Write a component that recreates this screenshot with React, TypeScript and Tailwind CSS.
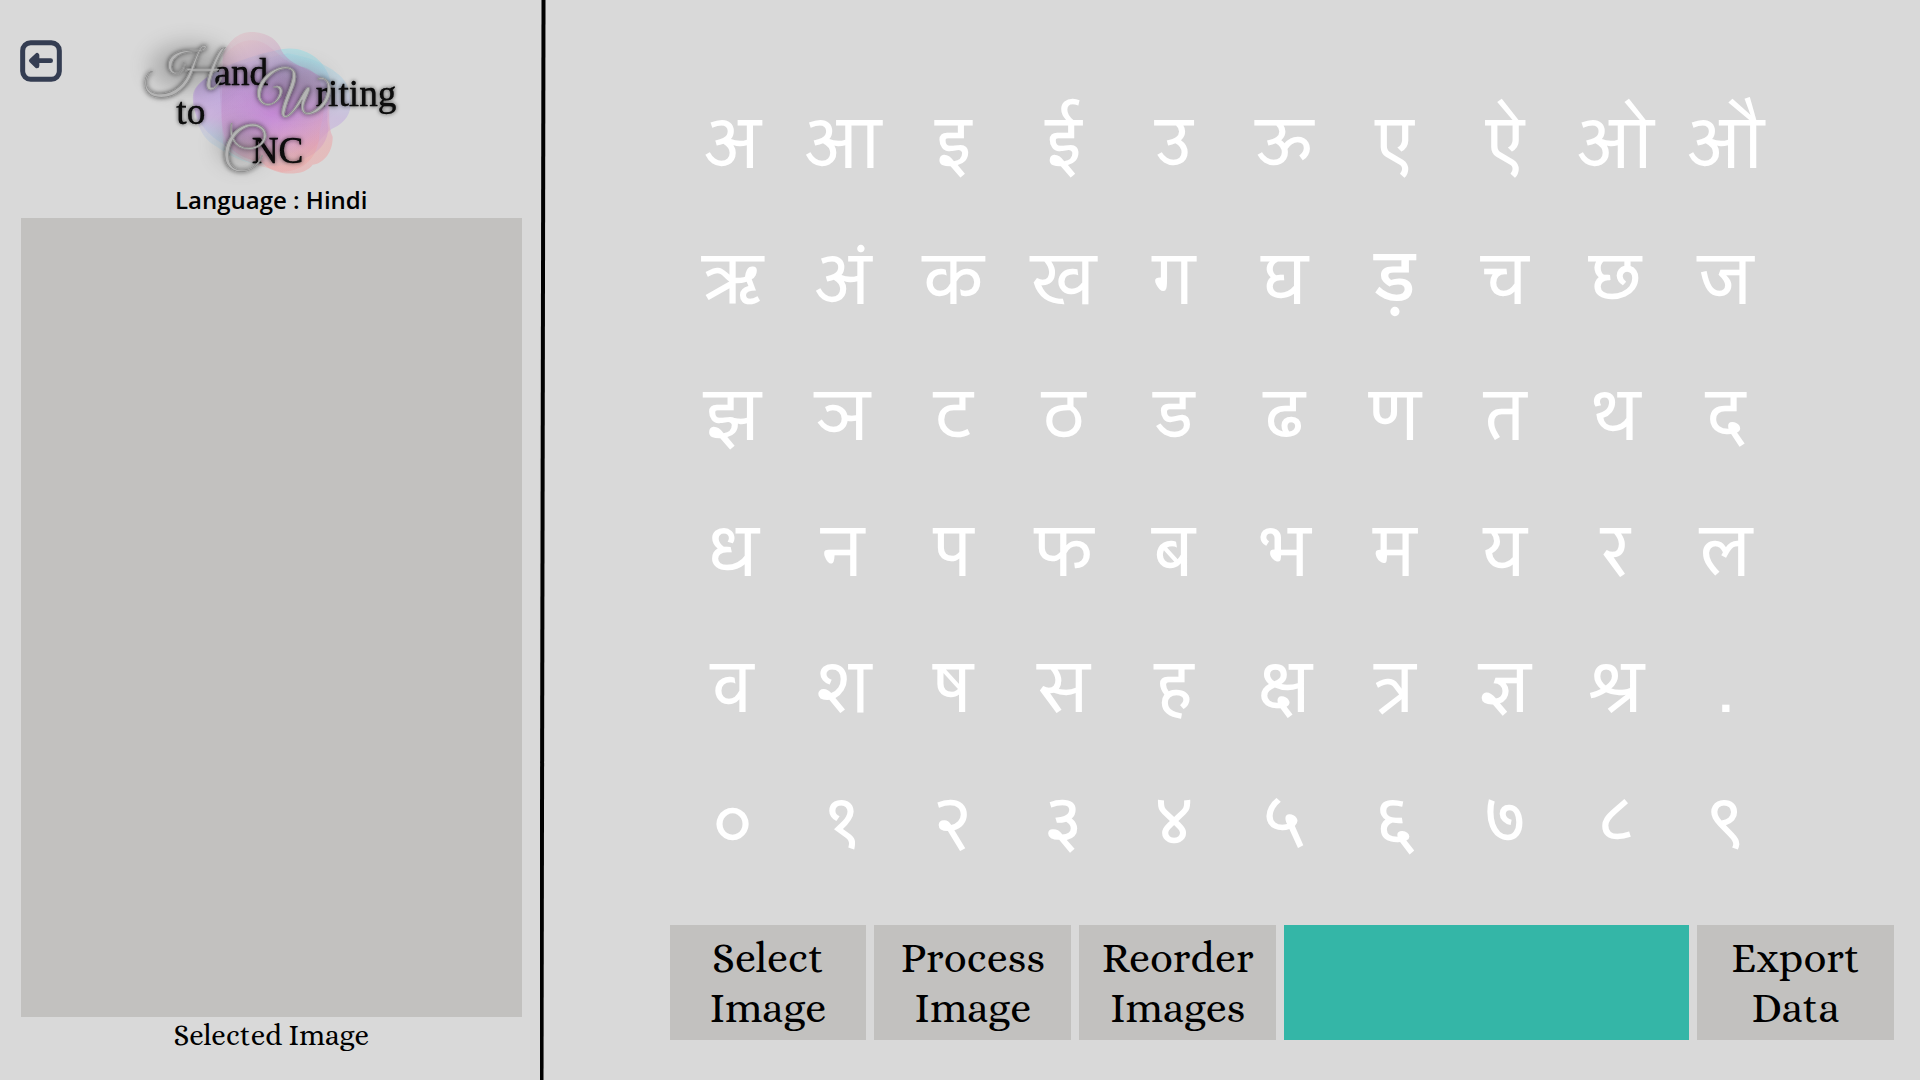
const letterRows = [
  ["अ", "आ", "इ", "ई", "उ", "ऊ", "ए", "ऐ", "ओ", "औ"],
  ["ऋ", "अं", "क", "ख", "ग", "घ", "\u0921\u093C", "च", "छ", "ज"],
  ["झ", "ञ", "ट", "ठ", "ड", "ढ", "ण", "त", "थ", "द"],
  ["ध", "न", "प", "फ", "ब", "भ", "म", "य", "र", "ल"],
  ["व", "श", "ष", "स", "ह", "क्ष", "त्र", "ज्ञ", "श्र", "."],
  ["०", "१", "२", "३", "४", "५", "६", "७", "८", "९"],
];

// Sarala has no below-dot form, so letters with a nukta are set in Noto Sans.
const NUKTA = "\u093C";

function Letter({ value }: { value: string }) {
  return (
    <div className="flex items-center justify-center">
      <div>
        {value.includes(NUKTA) ? (
          <span className="font-['Noto_Sans_Devanagari','Noto_Sans',sans-serif] text-[76px] font-medium">{value}</span>
        ) : (
          value
        )}
      </div>
    </div>
  );
}

function Logo() {
  return (
    <svg
      viewBox="0 0 840 510"
      role="img"
      aria-label="Hand Writing to CNC"
      className="h-[170px] w-[280px] overflow-visible"
    >
      <defs>
        <linearGradient id="rose" x1="0" y1="0" x2="0.3" y2="1">
          <stop offset="0" stopColor="#e6bcbe" />
          <stop offset="0.4" stopColor="#b888c4" />
          <stop offset="0.7" stopColor="#d49cd0" />
          <stop offset="1" stopColor="#f09a9a" />
        </linearGradient>
        <linearGradient id="aqua" x1="0.7" y1="0" x2="0.35" y2="1">
          <stop offset="0" stopColor="#98dce4" />
          <stop offset="0.45" stopColor="#b89ae0" />
          <stop offset="0.7" stopColor="#c4a4dc" />
          <stop offset="1" stopColor="#a4dce0" />
        </linearGradient>
        <radialGradient id="core">
          <stop offset="0" stopColor="#c67ade" stopOpacity="0.55" />
          <stop offset="1" stopColor="#c090dc" stopOpacity="0" />
        </radialGradient>
        <filter id="soft" x="-60%" y="-60%" width="220%" height="220%">
          <feGaussianBlur stdDeviation="32" />
        </filter>
        <filter id="glow" x="-30%" y="-30%" width="160%" height="160%">
          <feDropShadow dx="0" dy="0" stdDeviation="8" floodColor="#000" floodOpacity="0.7" />
        </filter>
        <filter id="ink" x="-30%" y="-30%" width="160%" height="160%">
          <feDropShadow dx="0" dy="0" stdDeviation="6" floodColor="#000" floodOpacity="0.7" />
        </filter>
      </defs>
      <path
        d="M470 100C540 110 632 150 650 200C668 250 664 298 606 325C560 350 540 432 440 438C340 442 280 396 250 376C205 350 188 290 190 225C196 180 240 170 290 140Z"
        fill="url(#aqua)"
        opacity="0.4"
      />
      <path
        d="M450 88C520 74 582 118 598 180C606 225 580 270 592 325C590 380 540 430 440 428C380 424 330 420 288 378C230 350 180 290 186 225C194 165 340 110 450 88Z"
        fill="url(#aqua)"
        opacity="0.55"
      />
      <path
        d="M275 105C298 52 330 36 364 36C412 38 440 60 452 92C478 142 560 148 592 190C604 240 584 310 605 350C606 402 572 432 545 434C522 470 430 472 392 426C350 420 312 404 290 372C262 320 276 250 275 105Z"
        fill="url(#rose)"
        opacity="0.45"
      />
      <path
        d="M262 146C292 66 350 50 392 66C440 88 450 128 520 142C574 156 596 240 566 330C566 390 540 452 450 456C400 440 300 420 276 370Z"
        fill="url(#rose)"
        opacity="0.3"
      />
      <ellipse cx="425" cy="280" rx="170" ry="130" fill="url(#core)" />
      <g fill="#444" opacity="0.3" filter="url(#soft)">
        <ellipse cx="175" cy="140" rx="120" ry="70" />
        <ellipse cx="490" cy="200" rx="100" ry="60" />
        <ellipse cx="330" cy="375" rx="70" ry="60" />
      </g>
      <g className="font-['Liberation_Serif',serif]" fontSize="112" fill="#080808" stroke="#080808" strokeWidth="1" filter="url(#ink)">
        <text x="250" y="195">and</text>
        <text x="554" y="258">riting</text>
        <text x="136" y="313">to</text>
        <text x="362" y="430">NC</text>
      </g>
      <g className="font-['Great_Vibes',cursive]" fontSize="156" fill="#b4b4b4" stroke="#8a8a8a" strokeWidth="2" filter="url(#glow)">
        <text x="43" y="203">H</text>
        <text x="382" y="273">W</text>
        <text x="272" y="434">C</text>
      </g>
    </svg>
  );
}

function BackIcon() {
  return (
    <svg viewBox="0 0 126 126" className="size-[42px]" aria-hidden="true">
      <rect x="8" y="8" width="110" height="110" rx="24" fill="none" stroke="#343d52" strokeWidth="15" />
      <path
        d="M92 62H50M34 62L51 46V78Z"
        fill="#343d52"
        stroke="#343d52"
        strokeWidth="14"
        strokeLinecap="round"
        strokeLinejoin="round"
      />
    </svg>
  );
}

function ActionButton({ label }: { label: string }) {
  return (
    <button
      type="button"
      className="flex min-w-0 flex-[197_1_0%] items-center justify-center bg-[#c2c1bf] text-center font-['Alice',serif] text-[42px] leading-[50px] text-black"
    >
      {label}
    </button>
  );
}

export default function App() {
  return (
    <div className="flex min-h-screen bg-[#d9d9d9] text-black">
      <aside className="flex w-[28.1%] flex-col pl-[21px] pr-[18px]">
        <header className="relative flex justify-center pt-5">
          <button type="button" aria-label="Back" className="absolute -left-px top-10">
            <BackIcon />
          </button>
          <Logo />
        </header>
        <h1 className="h-7 text-center font-['Open_Sans',sans-serif] text-[24px] font-semibold leading-[20px]">
          Language : Hindi
        </h1>
        <div className="flex-1 bg-[#c2c1bf]" />
        <p className="h-[63px] text-center font-['Alice',serif] text-[29px] leading-[38px]">Selected Image</p>
      </aside>
      <div className="w-1.5 bg-black [clip-path:polygon(2px_0,100%_0,4px_100%,0_100%)]" />
      <main className="flex flex-1 flex-col pb-10 pl-[124px] pr-[26px]">
        <div className="grid flex-1 grid-cols-10 grid-rows-6 pb-[34px] pl-2 pr-[113px] pt-[75px] font-['Sarala','Noto_Sans',sans-serif] text-[72px] leading-[100px] text-white">
          {letterRows.flat().map((letter) => (
            <Letter key={letter} value={letter} />
          ))}
        </div>
        <div className="flex h-[115px] gap-2">
          <ActionButton label="Select Image" />
          <ActionButton label="Process Image" />
          <ActionButton label="Reorder Images" />
          <div className="flex-[405_1_0%] bg-[#34b6a7]" />
          <ActionButton label="Export Data" />
        </div>
      </main>
    </div>
  );
}
